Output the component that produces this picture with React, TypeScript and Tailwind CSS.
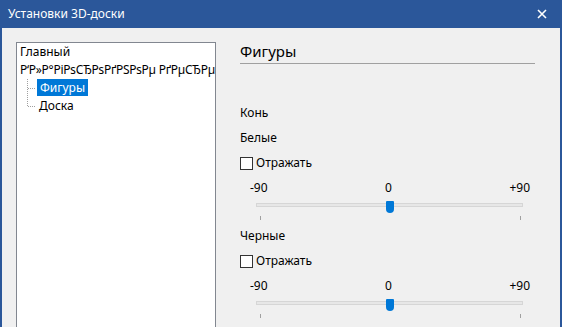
import React from 'react';

const font = { fontFamily: '"Noto Sans", "Open Sans", sans-serif' };

function TreeLines() {
  return (
    <svg width="10" height="36" className="shrink-0 ml-[7px]">
      <line x1="0.5" y1="0" x2="0.5" y2="27" stroke="#a0a0a0" strokeDasharray="1 1" />
      <line x1="1" y1="9.5" x2="9" y2="9.5" stroke="#a0a0a0" strokeDasharray="1 1" />
      <line x1="1" y1="27.5" x2="9" y2="27.5" stroke="#a0a0a0" strokeDasharray="1 1" />
    </svg>
  );
}

function AngleGroup({ title }: { title: string }) {
  return (
    <div>
      <div className="h-4 leading-4">{title}</div>
      {/* Checkbox */}
      <div className="flex items-center h-4 mt-[9px]">
        <span className="w-[13px] h-[13px] border border-[#333] bg-white" />
        <span className="ml-[3px] leading-4">Отражать</span>
      </div>
      {/* Scale labels */}
      <div className="flex justify-between h-4 leading-4 mt-[9px] pl-[10px] pr-[5px]">
        <span>-90</span>
        <span>0</span>
        <span>+90</span>
      </div>
      {/* Track */}
      <div className="relative h-[14px] mt-1 ml-[16px] w-[267px]">
        <div className="absolute top-[3px] left-0 right-0 h-[4px] bg-[#e7e7e7] border border-[#d6d6d6]" />
        <div className="absolute top-[1px] left-[130px] w-[8px] h-[12px] bg-[#0078d7] rounded-t-[1px] rounded-b-[4px]" />
      </div>
      {/* Ticks */}
      <div className="flex justify-between h-[4px] mt-[2px] ml-[20px] w-[261px]">
        <span className="w-px h-full bg-[#a0a0a0]" />
        <span className="w-px h-full bg-[#a0a0a0]" />
      </div>
    </div>
  );
}

export default function App() {
  return (
    <div
      className="w-[562px] h-[327px] overflow-hidden flex flex-col bg-[#2b579a] text-[12px] text-black"
      style={font}
    >
      {/* Title bar */}
      <div className="h-[28px] shrink-0 flex items-center justify-between pl-[8px]">
        <span className="text-white text-[12px]">Установки 3D-доски</span>
        <svg width="10" height="10" viewBox="0 0 10 10" className="mr-[15px]">
          <path d="M1 1 L9 9 M9 1 L1 9" stroke="#fff" strokeWidth="1.6" />
        </svg>
      </div>

      {/* Body */}
      <div className="flex-1 flex ml-[2px] mr-[2px] bg-[#f0f0f0] overflow-hidden">
        {/* Tree */}
        <div className="mt-[14px] ml-[14px] w-[200px] h-[320px] shrink-0 bg-white border border-[#828790] pl-[3px] overflow-hidden">
          <div className="h-[18px] leading-[18px]">Главный</div>
          <div className="h-[18px] leading-[18px] whitespace-nowrap tracking-[-0.25px]">
            Р‘Р»Р°РіРѕСЂРѕРґРЅРѕРµ РґРµСЂРµ
          </div>
          <div className="flex">
            <TreeLines />
            <div className="flex flex-col items-start">
              <div className="h-[17px] leading-[17px] px-[3px] bg-[#0078d7] text-white mb-px">Фигуры</div>
              <div className="h-[18px] leading-[18px] px-[2px]">Доска</div>
            </div>
          </div>
        </div>

        {/* Settings panel */}
        <div className="ml-[24px] w-[295px] pt-[13px]">
          <div className="h-[20px] leading-[20px] text-[15px]">Фигуры</div>
          <div className="mt-[2px] h-px bg-[#a0a0a0]" />
          <div className="mt-[41px] h-4 leading-4">Конь</div>
          <div className="mt-[9px]">
            <AngleGroup title="Белые" />
          </div>
          <div className="mt-[8px]">
            <AngleGroup title="Черные" />
          </div>
        </div>
      </div>
    </div>
  );
}
